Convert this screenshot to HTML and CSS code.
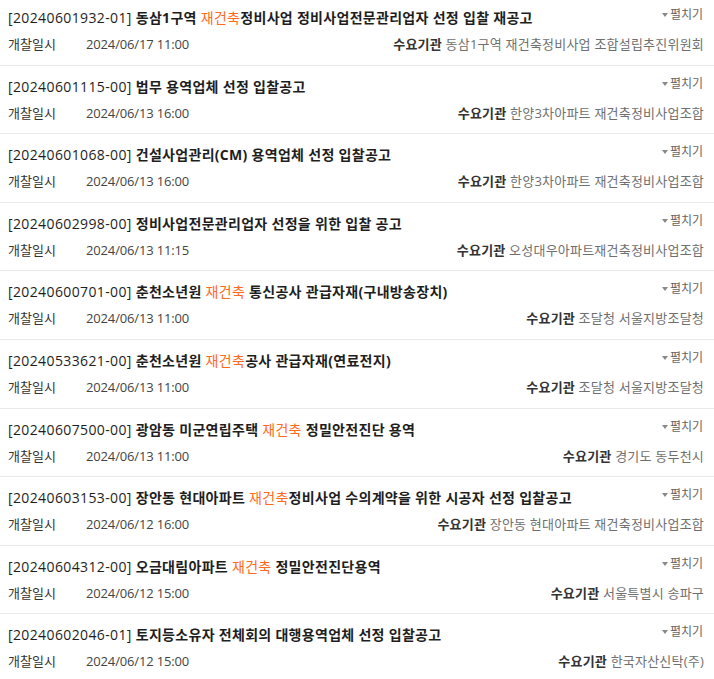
FILE: index.html
```html
<!DOCTYPE html>
<html lang="ko">
<head>
<meta charset="utf-8">
<link rel="stylesheet" href="styles.css">
</head>
<body>
<ul class="list">
  <li class="item">
    <div class="top"><p class="title"><span class="code">[20240601932-01]</span> 동삼1구역 <em class="hl">재건축</em>정비사업 정비사업전문관리업자 선정 입찰 재공고</p><span class="toggle"><span class="tri"></span>펼치기</span></div>
    <div class="meta"><span class="lbl">개찰일시</span><span class="date">2024/06/17 11:00</span><span class="org"><b>수요기관</b> 동삼1구역 재건축정비사업 조합설립추진위원회</span></div>
  </li>
  <li class="item">
    <div class="top"><p class="title"><span class="code">[20240601115-00]</span> 법무 용역업체 선정 입찰공고</p><span class="toggle"><span class="tri"></span>펼치기</span></div>
    <div class="meta"><span class="lbl">개찰일시</span><span class="date">2024/06/13 16:00</span><span class="org"><b>수요기관</b> 한양3차아파트 재건축정비사업조합</span></div>
  </li>
  <li class="item">
    <div class="top"><p class="title"><span class="code">[20240601068-00]</span> 건설사업관리(CM) 용역업체 선정 입찰공고</p><span class="toggle"><span class="tri"></span>펼치기</span></div>
    <div class="meta"><span class="lbl">개찰일시</span><span class="date">2024/06/13 16:00</span><span class="org"><b>수요기관</b> 한양3차아파트 재건축정비사업조합</span></div>
  </li>
  <li class="item">
    <div class="top"><p class="title"><span class="code">[20240602998-00]</span> 정비사업전문관리업자 선정을 위한 입찰 공고</p><span class="toggle"><span class="tri"></span>펼치기</span></div>
    <div class="meta"><span class="lbl">개찰일시</span><span class="date">2024/06/13 11:15</span><span class="org"><b>수요기관</b> 오성대우아파트재건축정비사업조합</span></div>
  </li>
  <li class="item">
    <div class="top"><p class="title"><span class="code">[20240600701-00]</span> 춘천소년원 <em class="hl">재건축</em> 통신공사 관급자재(구내방송장치)</p><span class="toggle"><span class="tri"></span>펼치기</span></div>
    <div class="meta"><span class="lbl">개찰일시</span><span class="date">2024/06/13 11:00</span><span class="org"><b>수요기관</b> 조달청 서울지방조달청</span></div>
  </li>
  <li class="item">
    <div class="top"><p class="title"><span class="code">[20240533621-00]</span> 춘천소년원 <em class="hl">재건축</em>공사 관급자재(연료전지)</p><span class="toggle"><span class="tri"></span>펼치기</span></div>
    <div class="meta"><span class="lbl">개찰일시</span><span class="date">2024/06/13 11:00</span><span class="org"><b>수요기관</b> 조달청 서울지방조달청</span></div>
  </li>
  <li class="item">
    <div class="top"><p class="title"><span class="code">[20240607500-00]</span> 광암동 미군연립주택 <em class="hl">재건축</em> 정밀안전진단 용역</p><span class="toggle"><span class="tri"></span>펼치기</span></div>
    <div class="meta"><span class="lbl">개찰일시</span><span class="date">2024/06/13 11:00</span><span class="org"><b>수요기관</b> 경기도 동두천시</span></div>
  </li>
  <li class="item">
    <div class="top"><p class="title"><span class="code">[20240603153-00]</span> 장안동 현대아파트 <em class="hl">재건축</em>정비사업 수의계약을 위한 시공자 선정 입찰공고</p><span class="toggle"><span class="tri"></span>펼치기</span></div>
    <div class="meta"><span class="lbl">개찰일시</span><span class="date">2024/06/12 16:00</span><span class="org"><b>수요기관</b> 장안동 현대아파트 재건축정비사업조합</span></div>
  </li>
  <li class="item">
    <div class="top"><p class="title"><span class="code">[20240604312-00]</span> 오금대림아파트 <em class="hl">재건축</em> 정밀안전진단용역</p><span class="toggle"><span class="tri"></span>펼치기</span></div>
    <div class="meta"><span class="lbl">개찰일시</span><span class="date">2024/06/12 15:00</span><span class="org"><b>수요기관</b> 서울특별시 송파구</span></div>
  </li>
  <li class="item">
    <div class="top"><p class="title"><span class="code">[20240602046-01]</span> 토지등소유자 전체회의 대행용역업체 선정 입찰공고</p><span class="toggle"><span class="tri"></span>펼치기</span></div>
    <div class="meta"><span class="lbl">개찰일시</span><span class="date">2024/06/12 15:00</span><span class="org"><b>수요기관</b> 한국자산신탁(주)</span></div>
  </li>
</ul>
</body>
</html>
```
FILE: styles.css
```css
html, body {
  margin: 0;
  padding: 0;
  background: #fff;
}
body {
  font-family: "Open Sans", "Noto Sans CJK KR", sans-serif;
  color: #222;
  overflow: hidden;
}
.list {
  list-style: none;
  margin: 0;
  padding: 0;
}
.item {
  padding: 10px 11px 9.6px 8px;
  border-bottom: 1px solid #e9e9e9;
  display: flex;
  flex-direction: column;
  gap: 6px;
}
.item:first-child {
  padding-top: 7px;
}
.top {
  display: flex;
  justify-content: space-between;
  align-items: flex-start;
}
.title {
  margin: 0;
  font-size: 14px;
  line-height: 21px;
  font-weight: 700;
  letter-spacing: 0.3px;
  color: #1e1e1e;
  white-space: nowrap;
}
.code {
  font-weight: 400;
  letter-spacing: 0.38px;
}
.hl {
  font-style: normal;
  font-weight: 400;
  color: #ff6a1c;
}
.toggle {
  font-size: 12px;
  line-height: 16px;
  color: #666;
  display: flex;
  align-items: center;
  gap: 2px;
}
.tri {
  width: 0;
  height: 0;
  border-left: 3.5px solid transparent;
  border-right: 3.5px solid transparent;
  border-top: 4px solid #888;
}
.meta {
  display: flex;
  align-items: center;
  font-size: 13px;
  line-height: 21px;
  white-space: nowrap;
}
.lbl {
  color: #333;
  width: 78px;
}
.date {
  color: #444;
  letter-spacing: -0.15px;
}
.org {
  margin-left: auto;
  color: #6f6f6f;
  margin-right: -1px;
  letter-spacing: 0.22px;
}
.org b {
  color: #333;
  font-weight: 700;
}
```
